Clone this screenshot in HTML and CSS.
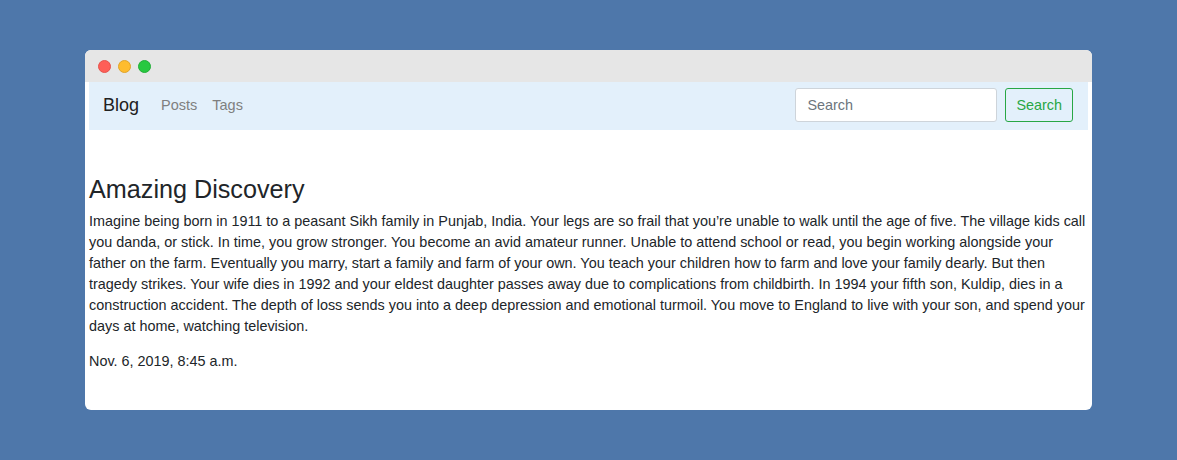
FILE: index.html
```html
<!DOCTYPE html>
<html>
<head>
<meta charset="utf-8">
<link rel="stylesheet" href="styles.css">
</head>
<body>
<div class="window">
  <div class="titlebar">
    <span class="dot red"></span>
    <span class="dot yellow"></span>
    <span class="dot green"></span>
  </div>
  <div class="content">
    <nav class="navbar">
      <a class="brand">Blog</a>
      <a class="nav-link">Posts</a>
      <a class="nav-link">Tags</a>
      <form class="search">
        <input class="search-input" type="text" placeholder="Search">
        <button class="search-btn" type="button">Search</button>
      </form>
    </nav>
    <article class="post">
      <h3 class="post-title">Amazing Discovery</h3>
      <p class="post-body">Imagine being born in 1911 to a peasant Sikh family in Punjab, India. Your legs are so frail that you’re unable to walk until the age of five. The village kids call you danda, or stick. In time, you grow stronger. You become an avid amateur runner. Unable to attend school or read, you begin working alongside your father on the farm. Eventually you marry, start a family and farm of your own. You teach your children how to farm and love your family dearly. But then tragedy strikes. Your wife dies in 1992 and your eldest daughter passes away due to complications from childbirth. In 1994 your fifth son, Kuldip, dies in a construction accident. The depth of loss sends you into a deep depression and emotional turmoil. You move to England to live with your son, and spend your days at home, watching television.</p>
      <p class="post-date">Nov. 6, 2019, 8:45 a.m.</p>
    </article>
  </div>
</div>
</body>
</html>
```
FILE: styles.css
```css
html, body {
  margin: 0;
  padding: 0;
}
body {
  background: #4e77aa;
  font-family: "Liberation Sans", Arial, sans-serif;
  padding: 50px 85px 0 85px;
}
.window {
  width: 1007px;
  height: 360px;
  background: #fff;
  border-radius: 6px;
  overflow: hidden;
}
.titlebar {
  height: 32px;
  background: #e6e6e6;
  display: flex;
  align-items: center;
  padding-left: 13px;
  gap: 7px;
}
.dot {
  width: 13px;
  height: 13px;
  border-radius: 50%;
  display: inline-block;
  box-sizing: border-box;
}
.red { background: #fe5f57; border: 1px solid #e5534c; }
.yellow { background: #febc2e; border: 1px solid #e0a42a; }
.green { background: #28c840; border: 1px solid #22ae37; }
.content {
  padding: 0 4px;
}
.navbar {
  height: 48px;
  background: #e3f0fb;
  display: flex;
  align-items: center;
  padding: 0 15px 2px 14px;
  box-sizing: border-box;
}
.brand {
  font-size: 18px;
  color: #212121;
  margin-right: 22px;
}
.nav-link {
  font-size: 14.5px;
  color: #7f7f7f;
  margin-right: 15px;
}
.search {
  margin-left: auto;
  display: flex;
  gap: 8px;
}
.search-input {
  width: 202px;
  height: 34px;
  box-sizing: border-box;
  border: 1px solid #ced4da;
  border-radius: 3px;
  padding: 0 11px;
  font-family: "Liberation Sans", Arial, sans-serif;
  font-size: 14.4px;
  color: #495057;
  background: #fff;
}
.search-input::placeholder {
  color: #6c757d;
}
.search-btn {
  height: 34px;
  box-sizing: border-box;
  border: 1px solid #28a745;
  border-radius: 3px;
  background: transparent;
  color: #28a745;
  font-family: "Liberation Sans", Arial, sans-serif;
  font-size: 14.4px;
  padding: 0 10px;
}
.post {
  padding-top: 44px;
  color: #212529;
}
.post-title {
  font-size: 25.2px;
  font-weight: 400;
  line-height: 1.2;
  margin: 0 0 7px 0;
}
.post-body {
  font-size: 14.4px;
  line-height: 21px;
  margin: 0 0 14px 0;
}
.post-date {
  font-size: 14.4px;
  line-height: 21px;
  margin: 0;
}
```
